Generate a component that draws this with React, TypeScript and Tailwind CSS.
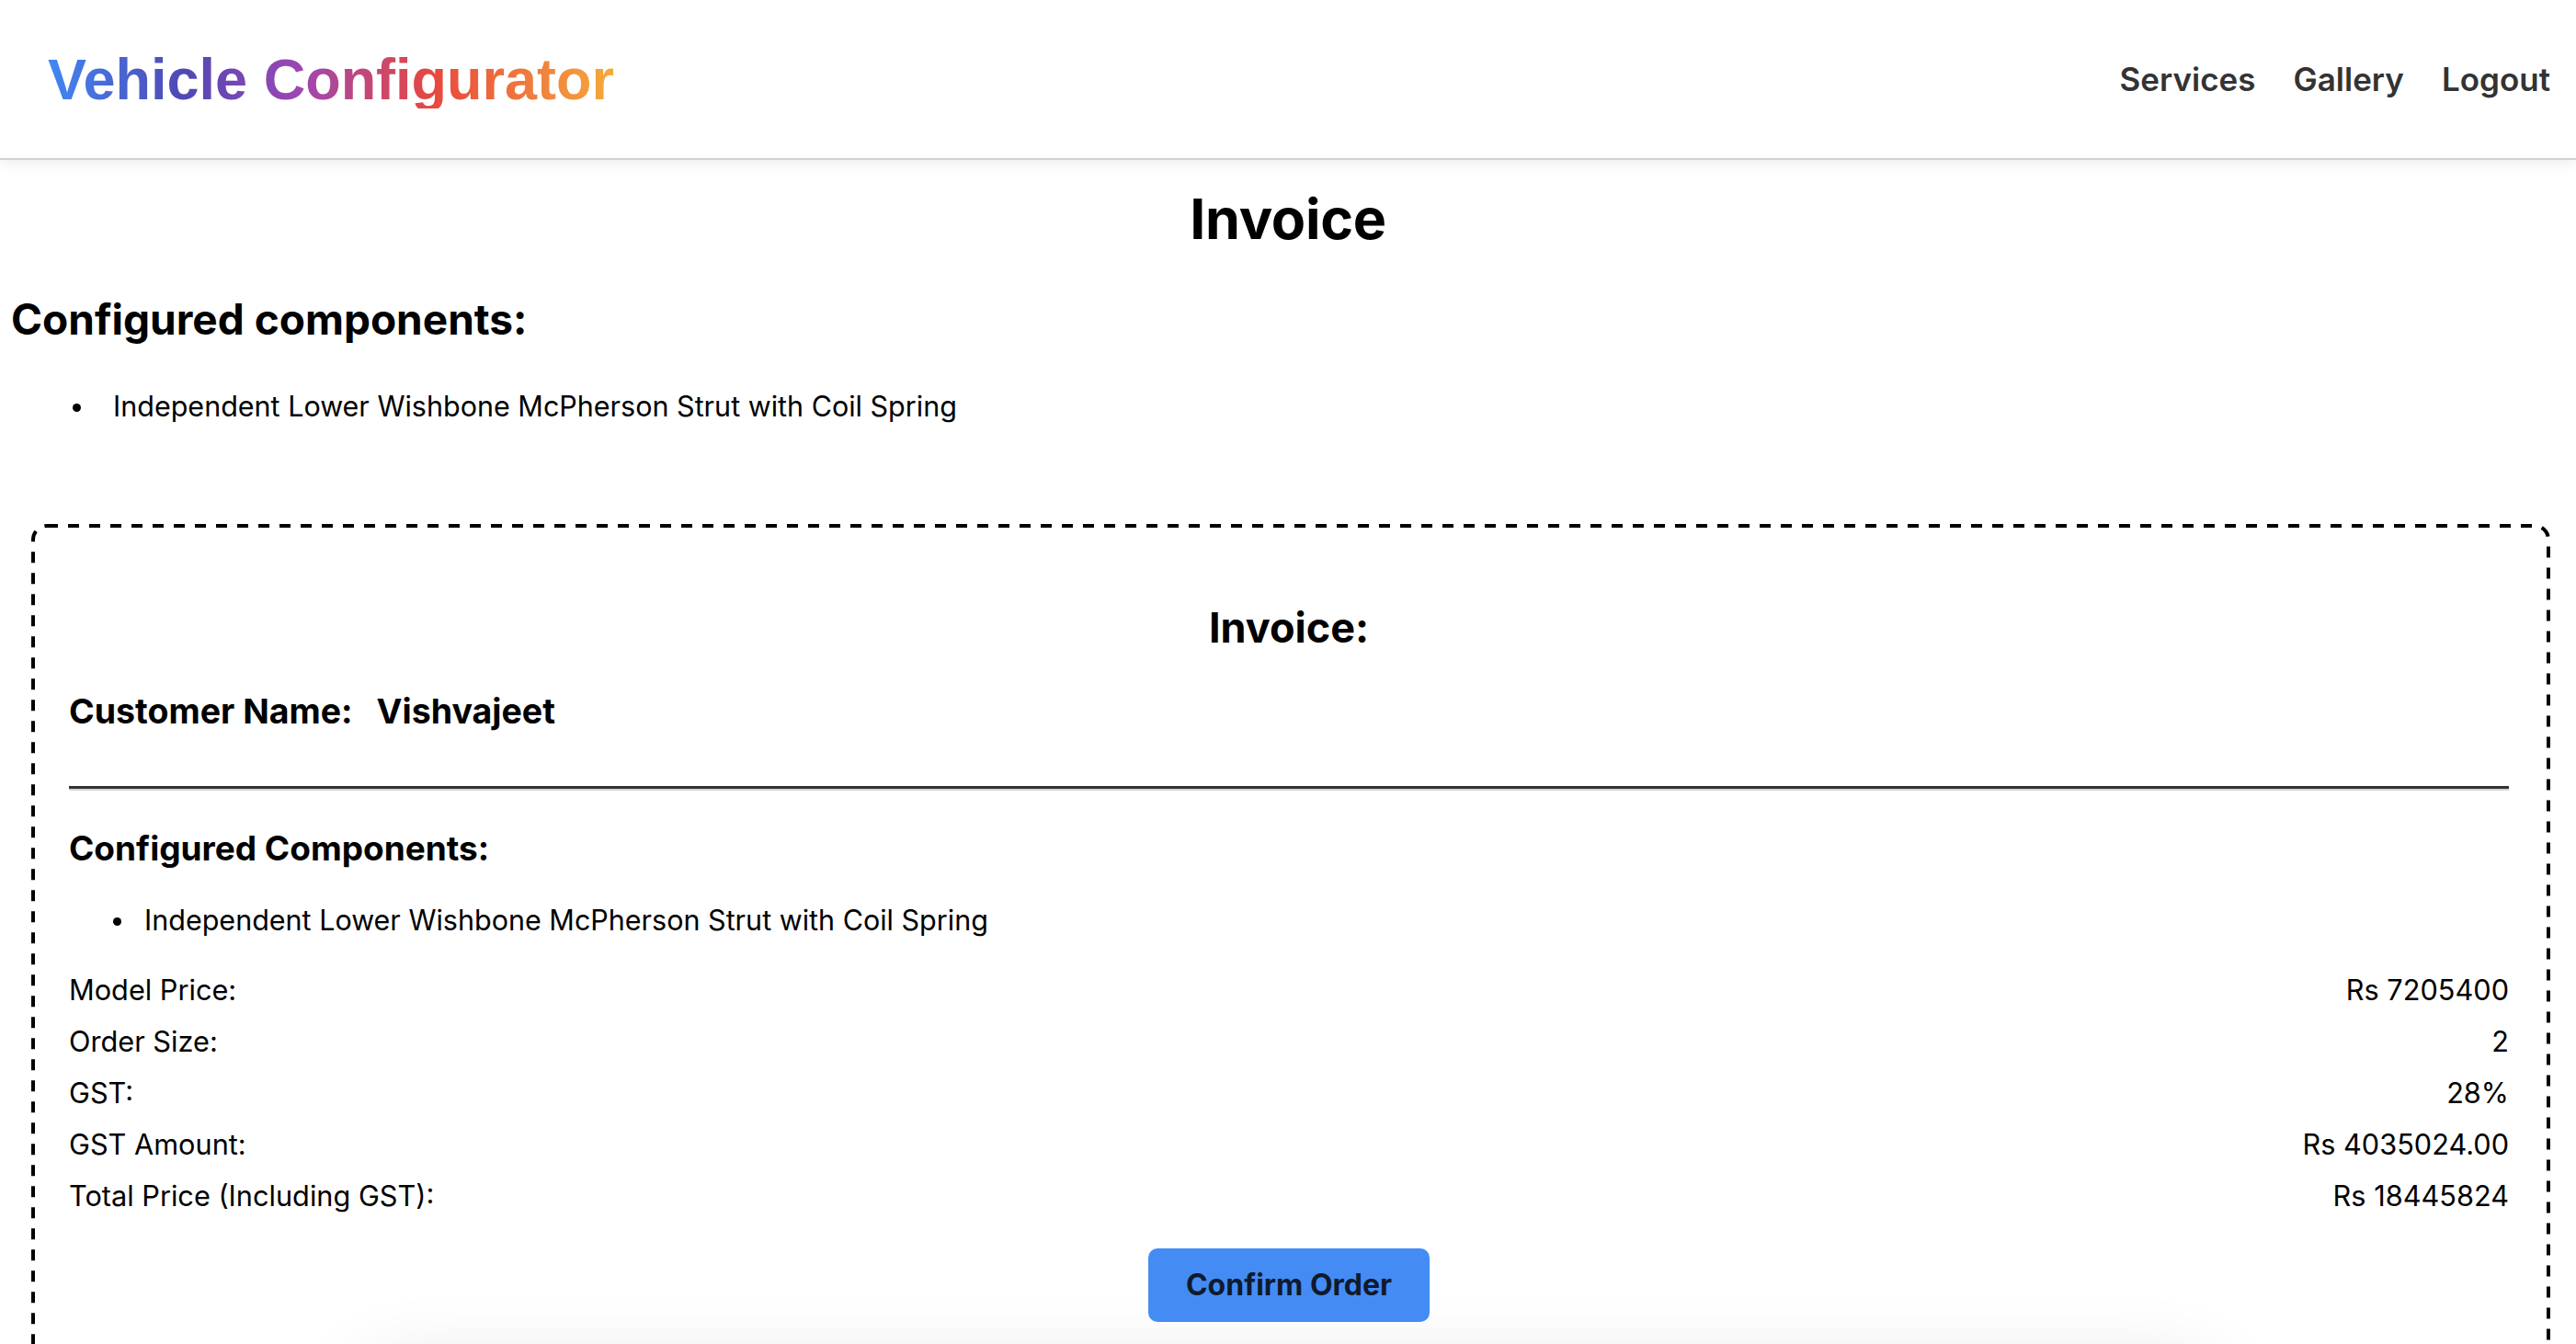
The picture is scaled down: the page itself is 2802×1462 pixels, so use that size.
import React from "react";

const rows: [string, string][] = [
  ["Model Price:", "Rs 7205400"],
  ["Order Size:", "2"],
  ["GST:", "28%"],
  ["GST Amount:", "Rs 4035024.00"],
  ["Total Price (Including GST):", "Rs 18445824"],
];

const component = "Independent Lower Wishbone McPherson Strut with Coil Spring";

function Header() {
  return (
    <header className="relative z-10 h-[174px] flex items-center justify-between pl-[52px] pr-[28px] border-b-2 border-[#d0d0d0] bg-white shadow-[0_4px_14px_rgba(0,0,0,0.07)]">
      <div className="font-['Liberation_Sans',Arial,sans-serif] text-[63px] leading-[63px] font-bold bg-[linear-gradient(90deg,#4287f3_0%,#5047b4_24%,#9b47b5_44%,#e8473f_68%,#f6aa3b_100%)] bg-clip-text text-transparent">
        Vehicle Configurator
      </div>
      <nav className="flex gap-[41px] text-[35px] leading-[36px] font-semibold text-[#333]">
        <a>Services</a>
        <a>Gallery</a>
        <a>Logout</a>
      </nav>
    </header>
  );
}

function Bullet({ gap }: { gap: string }) {
  return <span className={`mt-[13px] w-[9px] h-[9px] shrink-0 rounded-full bg-black ${gap}`} />;
}

export default function App() {
  return (
    <div className="min-h-screen bg-white text-black font-['Inter','Noto_Sans',sans-serif]">
      <Header />
      <main className="px-[12px]">
        <h1 className="mt-[32px] text-center text-[61px] leading-[64px] tracking-[-0.3px] font-bold">Invoice</h1>
        <h2 className="mt-[55px] text-[46px] leading-[44px] font-bold">Configured components:</h2>
        <ul className="mt-[57px] pl-[67px] text-[30.5px] leading-[31px]">
          <li className="flex items-start">
            <Bullet gap="mr-[35px]" />
            {component}
          </li>
        </ul>

        <section className="relative mt-[113px] ml-[22px] mr-[16px] border-4 border-transparent pl-[37px] pr-[41px] pt-[85px]">
          <svg className="pointer-events-none absolute inset-[-2px] w-[calc(100%+4px)] h-[calc(100%+4px)] overflow-visible">
            <rect
              x="0"
              y="0"
              width="100%"
              height="100%"
              rx="15"
              fill="none"
              stroke="#000"
              strokeWidth="4"
              strokeDasharray="12 11"
            />
          </svg>
          <h2 className="text-center text-[45px] leading-[48px] font-bold">Invoice:</h2>
          <h3 className="mt-[48px] text-[37.5px] leading-[37px] font-bold">
            Customer Name:<span className="ml-[26px]">Vishvajeet</span>
          </h3>
          <div className="mt-[63px] border-t-[3px] border-t-[#333] border-b-2 border-b-[#d2d2d2]" />
          <h3 className="mt-[44px] text-[37px] leading-[37px] font-bold">Configured Components:</h3>
          <ul className="mt-[44px] pl-[48px] text-[30.5px] leading-[31px]">
            <li className="flex items-start">
              <Bullet gap="mr-[25px]" />
              {component}
            </li>
          </ul>
          <div className="mt-[33px] text-[30.7px]">
            {rows.map(([label, value]) => (
              <div key={label} className="flex justify-between h-[56px] leading-[56px]">
                <span>{label}</span>
                <span>{value}</span>
              </div>
            ))}
          </div>
          <div className="mt-[29px] flex justify-center">
            <button
              type="button"
              className="w-[306px] h-[80px] rounded-[10px] bg-[#448cf4] text-[32px] font-bold text-[#0f1a2e]"
            >
              Confirm Order
            </button>
          </div>
          <div className="mt-[55px] mx-auto w-[2000px] h-[300px] bg-white rounded-[20px] shadow-[0_0_90px_rgba(0,0,0,0.14)]" />
        </section>
      </main>
    </div>
  );
}
